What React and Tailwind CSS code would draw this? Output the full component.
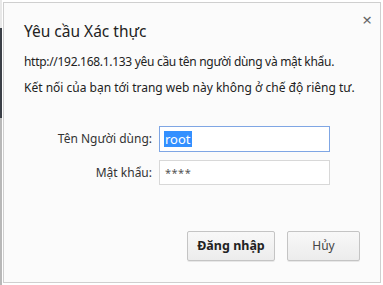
export default function App() {
  const font = { fontFamily: '"Noto Sans", "Open Sans", sans-serif' };
  return (
    <div className="w-[383px] h-[285px] bg-white flex overflow-hidden" style={font}>
      <div className="w-[2px] h-full flex flex-col">
        <div className="h-[28px] bg-[#e8e8e8]" />
        <div className="h-[90px] bg-[#3a3f47]" />
        <div className="flex-1 bg-[#b8b8b8]" />
      </div>
      <div className="ml-[1px] mt-[2px] w-[378px] h-[281px] border border-[#cfcfcf] bg-[#fbfbfb] relative flex flex-col pl-[20px] pr-[20px]">
        <div className="absolute right-[8px] top-[9px] text-[17px] leading-[16px] text-[#666]">×</div>
        <div className="pt-[18px] text-[15.5px] leading-[20px] text-[#222]">Yêu cầu Xác thực</div>
        <div className="mt-[13px] text-[12px] leading-[16px] text-[#222] tracking-[-0.3px]">
          http://192.168.1.133 yêu cầu tên người dùng và mật khẩu.
        </div>
        <div className="mt-[10px] text-[12px] leading-[16px] text-[#222]">
          Kết nối của bạn tới trang web này không ở chế độ riêng tư.
        </div>
        <div className="mt-[30px] flex flex-col gap-[8px]">
          <div className="flex items-center">
            <div className="w-[128px] text-right text-[12px] text-[#333]">Tên Người dùng:</div>
            <div className="ml-[7px] w-[171px] h-[26px] border border-[#7fa6e4] bg-white flex items-center px-[4px]">
              <span className="bg-[#3390ff] text-white text-[13px] leading-[16px] px-[1px]">root</span>
            </div>
          </div>
          <div className="flex items-center">
            <div className="w-[128px] text-right text-[12px] text-[#333]">Mật khẩu:</div>
            <div className="ml-[7px] w-[171px] h-[25px] border border-[#d8d8d8] bg-white flex items-center px-[5px]">
              <span className="text-[#555] text-[11px] leading-[12px] tracking-[0.5px]">****</span>
            </div>
          </div>
        </div>
        <div className="mt-[46px] flex justify-end gap-[12px]">
          <button className="w-[88px] h-[30px] border border-[#c4c4c4] rounded-[2px] bg-gradient-to-b from-[#f8f8f8] to-[#ececec] shadow-[0_1px_0_rgba(0,0,0,0.08)] text-[12.5px] font-bold text-[#222]">
            Đăng nhập
          </button>
          <button className="w-[73px] h-[30px] border border-[#c4c4c4] rounded-[2px] bg-gradient-to-b from-[#f8f8f8] to-[#ececec] shadow-[0_1px_0_rgba(0,0,0,0.08)] text-[12px] text-[#444]">
            Hủy
          </button>
        </div>
      </div>
    </div>
  );
}
